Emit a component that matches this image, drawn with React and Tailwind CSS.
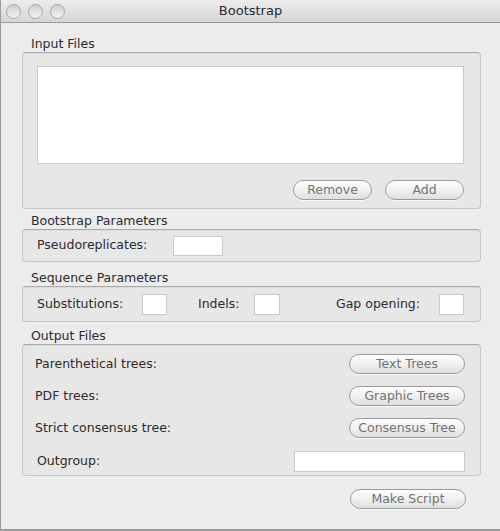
import React from "react";

const font = { fontFamily: '"DejaVu Sans", "Lucida Grande", sans-serif' };

const Pill = ({ children, className = "" }) => (
  <div
    className={
      "flex h-[20px] items-center justify-center rounded-full border border-[#9a9a9a] bg-gradient-to-b from-[#fdfdfd] via-[#f1f1f1] to-[#dedede] text-[12.5px] text-[#727272] shadow-[0_1px_0_rgba(255,255,255,0.8)] " +
      className
    }
  >
    {children}
  </div>
);

const Field = ({ className = "" }) => (
  <div className={"border border-[#c9c9c9] bg-white " + className} />
);

const GroupLabel = ({ children, className = "" }) => (
  <div className={"ml-[9px] flex h-[16px] items-center text-[12.5px] text-[#2b2b2b] " + className}>
    {children}
  </div>
);

const Box = ({ children, className = "" }) => (
  <div
    className={
      "rounded-[4px] border border-[#c6c6c6] border-t-[#aaaaaa] bg-[#e7e7e7] shadow-[inset_0_1px_1px_rgba(0,0,0,0.06)] " +
      className
    }
  >
    {children}
  </div>
);

const Dot = () => (
  <div className="h-[15px] w-[15px] rounded-full border border-[#a9a9a9] bg-gradient-to-b from-[#cfcfcf] to-[#f4f4f4]" />
);

export default function App() {
  return (
    <div style={font} className="h-[531px] w-[500px] overflow-hidden bg-[#ececec]">
      <div className="flex h-full flex-col border-b-2 border-l border-[#9c9c9c]">
        <div className="relative flex h-[23px] items-center border-b border-[#999999] bg-gradient-to-b from-[#ececec] to-[#d6d6d6]">
          <div className="ml-[5px] flex gap-[7px]">
            <Dot />
            <Dot />
            <Dot />
          </div>
          <div className="absolute inset-0 flex items-center justify-center text-[13px] text-[#2a2a2a]">
            Bootstrap
          </div>
        </div>

        <div className="ml-[21px] w-[459px] text-[12.5px]">
          <GroupLabel className="mt-[13px]">Input Files</GroupLabel>
          <Box className="h-[157px] pl-[14px] pr-[16px] pt-[13px]">
            <Field className="h-[98px] w-full" />
            <div className="mt-[16px] flex justify-end gap-[13px]">
              <Pill className="w-[79px]">Remove</Pill>
              <Pill className="w-[79px]">Add</Pill>
            </div>
          </Box>

          <GroupLabel className="mt-[4px]">Bootstrap Parameters</GroupLabel>
          <Box className="flex h-[33px] items-center pl-[14px]">
            <span className="w-[136px] text-[#2b2b2b]">Pseudoreplicates:</span>
            <Field className="h-[20px] w-[50px]" />
          </Box>

          <GroupLabel className="mt-[8px]">Sequence Parameters</GroupLabel>
          <Box className="flex h-[36px] items-center pl-[14px] text-[#2b2b2b]">
            <span className="w-[105px]">Substitutions:</span>
            <Field className="h-[21px] w-[25px]" />
            <span className="ml-[31px] w-[56px]">Indels:</span>
            <Field className="h-[21px] w-[26px]" />
            <span className="ml-[56px] w-[103px]">Gap opening:</span>
            <Field className="h-[21px] w-[25px]" />
          </Box>

          <GroupLabel className="mt-[6px]">Output Files</GroupLabel>
          <Box className="h-[132px] pl-[12px] pr-[15px] pt-[9px] text-[#2b2b2b]">
            <div className="flex h-[20px] items-center justify-between">
              <span>Parenthetical trees:</span>
              <Pill className="w-[116px]">Text Trees</Pill>
            </div>
            <div className="mt-[12px] flex h-[20px] items-center justify-between">
              <span>PDF trees:</span>
              <Pill className="w-[116px]">Graphic Trees</Pill>
            </div>
            <div className="mt-[12px] flex h-[20px] items-center justify-between">
              <span>Strict consensus tree:</span>
              <Pill className="w-[116px]">Consensus Tree</Pill>
            </div>
            <div className="mt-[13px] flex h-[21px] items-center justify-between">
              <span className="ml-[2px]">Outgroup:</span>
              <Field className="h-[21px] w-[171px]" />
            </div>
          </Box>

          <div className="mt-[13px] flex justify-end pr-[15px]">
            <Pill className="w-[116px]">Make Script</Pill>
          </div>
        </div>
      </div>
    </div>
  );
}
